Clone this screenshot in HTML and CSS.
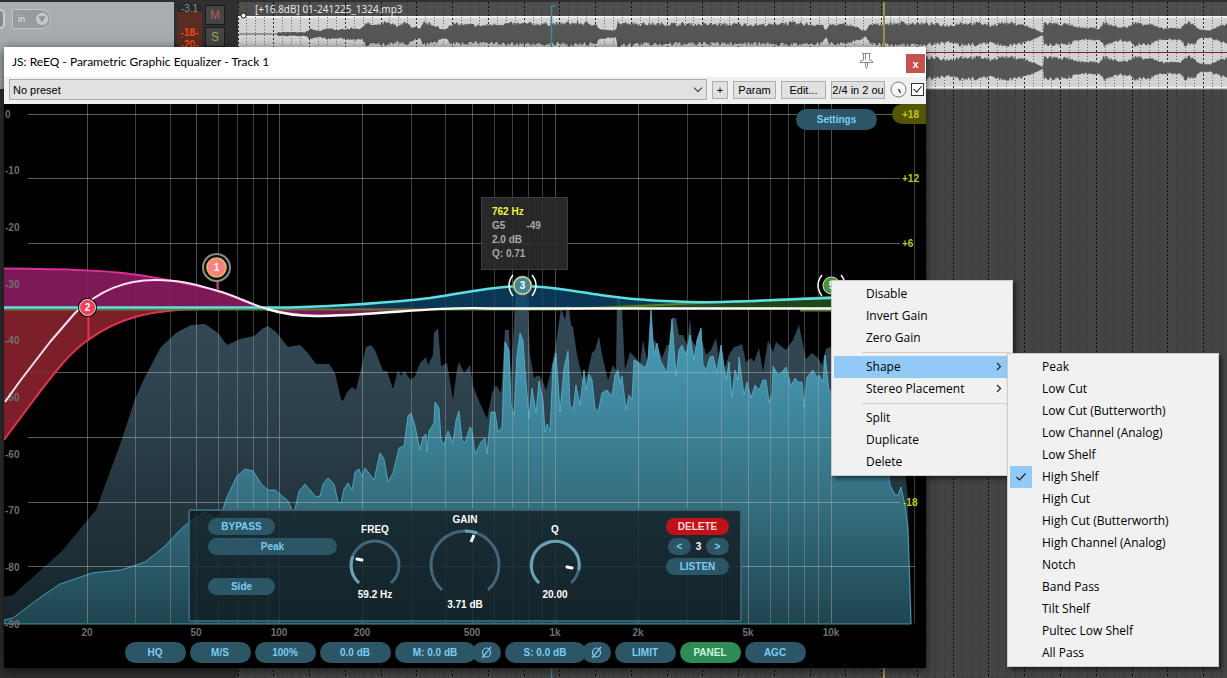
FILE: index.html
```html
<!DOCTYPE html>
<html lang="en">
<head>
<meta charset="utf-8">
<title>ReEQ - Parametric Graphic Equalizer</title>
<link rel="stylesheet" href="styles.css">
</head>
<body>
<div class="daw">
  <div class="side">
    <div class="track">
      <div class="track-main">
        <span class="track-dial"></span>
        <button class="input-btn" type="button">in
          <svg width="17" height="16" viewBox="0 0 17 16"><circle cx="8" cy="8" r="7" fill="#c3c7c8"/><path d="M4 5h8l-4 7z" fill="#8d9294"/></svg>
        </button>
      </div>
      <div class="meter"><span class="peak">-3.1</span><span class="hot">-18-</span><span class="hot">-20-</span></div>
      <div class="track-btns">
        <button class="mute" type="button">M</button>
        <button class="solo" type="button">S</button>
      </div>
    </div>
  </div>
  <div class="arrange">
    <svg class="arrange-art" viewBox="238 0 989 678" preserveAspectRatio="xMinYMin slice" aria-hidden="true">
      <rect x="238" width="989" height="678" fill="#444"/>
      <rect x="238" y="2" width="989" height="14" fill="#4e4e4e"/>
      <rect x="238" y="16" width="989" height="73" fill="#d0d3d2"/>
      <path d="M238 17h989M238 87.500h989" stroke="#f1f3f2" stroke-width="2"/>
      <path d="M238 89h989" stroke="#999"/>
      <path id="minor" stroke="#222" stroke-opacity=".6" stroke-dasharray="1 2" fill="none"/>
      <path id="major" stroke="#000" stroke-opacity=".8" stroke-dasharray="2 2" fill="none"/>
      <path id="wave-l" fill="#565656"/>
      <path id="wave-r" fill="#565656"/>
      <path d="M238 52.500h989" stroke="#8a1f24" stroke-width="1"/>
      <rect x="238" width="989" height="2" fill="#303030"/>
      <path d="M551.500 678V6h4" stroke="#3f8f85" stroke-width="1.500" fill="none"/>
      <path d="M884 2v676" stroke="#a0924c" stroke-width="2"/>
      <circle cx="243.500" cy="15.500" r="2.500" fill="#fff" stroke="#111"/>
    </svg>
    <span class="item-name">[+16.8dB] 01-241225_1324.mp3</span>
  </div>
</div>

<main class="window">
  <header class="titlebar">
    <h1>JS: ReEQ - Parametric Graphic Equalizer - Track 1</h1>
    <button class="pin" type="button" aria-label="Pin">
      <svg width="16" height="18" viewBox="0 0 16 18" fill="none" stroke="#8c8c8c"><path d="M3 1.500h9M4.500 2v6M10.500 2v6M6.500 2v5.500M4.500 8Q1 8.500 1 10.500h13Q14 8.500 10.500 8M6.500 11v3.500l1 2 1-2V11"/></svg>
    </button>
    <button class="close" type="button" aria-label="Close">x</button>
  </header>
  <div class="toolbar">
    <div class="preset">
      <select aria-label="Preset"><option>No preset</option></select>
      <svg width="10" height="6" viewBox="0 0 10 6" fill="none" stroke="#444" stroke-width="1.200"><path d="M1 .7l4 4 4-4"/></svg>
    </div>
    <button class="tool add" type="button">+</button>
    <button class="tool param" type="button">Param</button>
    <button class="tool edit" type="button">Edit...</button>
    <button class="tool io" type="button">2/4 in 2 ou</button>
    <svg class="wet" width="17" height="17" viewBox="0 0 17 17"><circle cx="8.500" cy="8.500" r="7.500" fill="#f8f8f8" stroke="#777"/><path d="M8.500 8l2 4" stroke="#222" stroke-width="1.300"/></svg>
    <input class="enable" type="checkbox" checked aria-label="Enable effect">
  </div>

  <section class="graph">
    <svg class="plot" viewBox="4 104 922 564" preserveAspectRatio="none">
      <defs>
        <linearGradient id="peakFill" gradientUnits="userSpaceOnUse" x1="0" y1="300" x2="0" y2="624"><stop offset="0" stop-color="#344b58"/><stop offset=".45" stop-color="#293d47"/><stop offset="1" stop-color="#15242a"/></linearGradient>
        <linearGradient id="liveFill" gradientUnits="userSpaceOnUse" x1="0" y1="310" x2="0" y2="624"><stop offset="0" stop-color="#4b9fba"/><stop offset=".35" stop-color="#3e859b"/><stop offset=".65" stop-color="#336b7b"/><stop offset="1" stop-color="#1f4550"/></linearGradient>
      </defs>
      <rect x="4" y="104" width="922" height="564" fill="#000"/>
      <path fill="url(#peakFill)" d="M4 624V597L13 595 62 551 96 510 121 442 135 399 144 379 155 358 161 347 176 333 191 325 205 324 218 333 227 345 240 339 254 336 262 329 268 326 276 332 288 347 300 345 307 352 316 364 329 364 335 373 341 399 343 401 347 392 352 387 356 390 361 369 366 347 371 345 375 350 383 371 387 371 393 389 398 370 401 376 404 371 411 380 415 376 420 363 426 357 428 365 433 355 434 333 438 328 441 366 447 363 453 400 457 369 459 362 464 373 470 365 473 386 479 401 487 419 492 393 496 385 501 393 505 330 509 330 511 380 515 305 516 289 527 289 530 355 534 378 539 375 542 380 546 390 550 375 555 350 558 330 561 308 565 320 568 301 571 325 573 327 577 355 583 380 587 375 592 353 595 350 599 336 602 355 608 380 613 365 616 370 617 300 619 295 622 310 625 370 630 352 636 358 640 365 643 340 647 360 650 345 655 340 662 358 667 345 670 345 672 318 676 318 679 335 683 335 687 345 690 318 692 340 698 350 702 340 706 355 711 350 716 338 719 360 724 370 729 355 734 347 738 346 742 344 746 362 751 358 754 362 759 348 763 372 768 340 773 352 776 342 786 350 793 340 799 325 803 345 806 359 812 353 818 358 822 365 826 349 830 347 850 370 880 420 905 470 908 500 912 624Z"/>
      <path fill="url(#liveFill)" stroke="#57b9d5" stroke-opacity=".75" d="M4 624V620L13 618 38 599 60 584 92 573 121 570 145 562 164 547 180 530 189 522 205 512 215 518 221 515 227 497 237 476 245 469 253 471 262 485 268 490 275 490 288 501 294 514 299 491 305 484 316 497 320 496 323 484 328 478 334 484 338 502 341 503 344 489 348 483 352 490 355 472 359 469 362 477 365 468 374 480 380 453 384 459 388 482 393 473 399 448 404 446 408 416 411 413 415 426 420 450 423 437 426 434 427 452 429 431 434 423 435 402 439 408 441 440 444 445 448 431 453 443 456 420 459 411 462 440 465 443 470 427 472 430 475 454 481 442 485 438 487 454 491 412 495 412 498 432 502 427 505 342 509 350 511 405 514 415 517 355 520 333 523 340 525 370 529 418 532 388 536 413 539 381 543 400 545 432 547 424 550 431 553 365 556 353 560 412 564 368 568 351 570 405 573 409 576 385 580 405 584 370 586 390 589 374 592 380 595 408 598 412 602 393 607 390 612 396 615 375 618 370 620 383 622 376 626 410 629 395 632 400 634 360 638 362 645 368 648 360 651 310 654 355 657 343 660 360 667 373 672 319 676 376 679 350 682 345 686 355 690 335 694 360 697 340 701 328 703 365 706 370 710 357 713 356 717 372 721 345 726 380 729 362 732 398 735 370 738 380 739 357 744 395 747 382 751 398 755 385 759 390 763 380 766 380 769 402 772 395 773 366 778 375 782 372 786 367 791 386 795 378 798 382 802 382 804 407 807 377 813 370 817 378 819 375 823 382 825 355 829 390 832 392 860 420 888 470 890 485 895 495 898 495 901 487 905 505 908 530 911 624Z"/>
      <g fill="none" stroke="#b9b9b9" stroke-opacity=".42">
        <path d="M87.500 104V623M279.500 104V623M196.500 104V623M362.500 104V623M472.500 104V623M555.500 104V623M638.500 104V623M748.500 104V623M831.500 104V623"/>
        <path stroke-opacity=".34" d="M135.500 104V623M170.500 104V623M218.500 104V623M237.500 104V623M253.500 104V623M267.500 104V623M411.500 104V623M445.500 104V623M494.500 104V623M512.500 104V623M528.500 104V623M542.500 104V623M687.500 104V623M721.500 104V623M770.500 104V623M788.500 104V623M804.500 104V623M818.500 104V623M914.500 104V623"/>
        <path stroke-opacity=".5" d="M28 114.500H900M28 178.500H900M28 243.500H900M28 372.500H900M28 437.500H900M28 502.500H900M28 566.500H915"/>
      </g>
      <path fill="#8b1c60" fill-opacity=".9" d="M4 268 41 269 80 271 135 274 165 279 190 284 218 291 250 302 267 309 285 313 315 316 340 315 400 311 450 308H4Z"/>
      <path fill="#8a222e" fill-opacity=".9" d="M4 308H240L200 309 165 311 135 317 110 327 88 340 63 363 30 405 4 440Z"/>
      <path fill="#0d4b70" fill-opacity=".75" d="M290 308 337 306 380 303 430 298 470 291 515 286 550 288 600 295 640 300 690 302 740 308Z"/>
      <path fill="#234d1c" fill-opacity=".9" d="M560 308 640 304 700 302 760 300 832 297V308Z"/>
      <g class="axis">
        <text x="5" y="118">0</text><text x="5" y="174">-10</text><text x="5" y="231">-20</text><text x="5" y="288">-30</text><text x="5" y="344">-40</text><text x="5" y="401">-50</text><text x="5" y="458">-60</text><text x="5" y="514">-70</text><text x="5" y="571">-80</text><text x="5" y="628">-90</text>
      </g>
      <g class="axis mid">
        <text x="87" y="636">20</text><text x="196" y="636">50</text><text x="279" y="636">100</text><text x="362" y="636">200</text><text x="472" y="636">500</text><text x="555" y="636">1k</text><text x="638" y="636">2k</text><text x="748" y="636">5k</text><text x="831" y="636">10k</text>
      </g>
      <g fill="none" stroke-linejoin="round">
        <path stroke="#dc2f9c" stroke-width="2" d="M4 268.500C60 269 110 270 145 276S200 286 218 291 250 304 267 309 315 317 345 315"/>
        <path stroke="#e0344e" stroke-width="2" d="M4 440 30 405Q50 378 63 363T88 340Q110 324 135 317T200 309"/>
        <path stroke="#5a7d2d" stroke-width="2" d="M4 309.500H560L640 306 700 303 770 300 831 297M800 310.500h31"/>
        <path stroke="#5be0e6" stroke-width="2.500" d="M4 307.500H290Q370 305 430 298C470 292 495 286 522 286S580 292 600 295 650 301 690 302 760 300 831 298"/>
        <path stroke="#fff" stroke-width="2.500" d="M267 309Q290 316 315 316T400 311.500 490 308.500H831"/>
        <path stroke="#fbe3f1" stroke-width="2" d="M5 402 20 381 50 342 75 313C100 290 125 280 155 280S200 286 218 291 250 304 267 309"/>
        <path stroke="#dc2f9c" stroke-width="2" d="M217.500 278V290"/>
        <path stroke="#e0344e" stroke-width="2" d="M88.500 317V341"/>
      </g>
      <g class="nodes">
        <circle cx="216.500" cy="267.500" r="13.500" fill="#111" stroke="#8b8b8b" stroke-width="2"/>
        <circle cx="216.500" cy="267.500" r="9.500" fill="#ff7f83" stroke="#d9c35a" stroke-width="1.500"/>
        <text x="216.500" y="271">1</text>
        <circle cx="87.500" cy="307.500" r="9.500" fill="#000"/>
        <circle cx="87.500" cy="307.500" r="8" fill="#f23e5b" stroke="#ffe0e4"/>
        <text x="87.500" y="311">2</text>
        <circle cx="522.500" cy="285.500" r="10" fill="#8f8a3c"/>
        <circle cx="522.500" cy="285.500" r="8.500" fill="#43898c" stroke="#e6f2ee"/>
        <text x="522.500" y="289">3</text>
        <path d="M513 275Q505 285 513 296M532 275Q540 285 532 296" fill="none" stroke="#fff" stroke-width="1.500"/>
        <circle cx="831.500" cy="285.500" r="8.500" fill="#4c9136" stroke="#d8ecd2"/>
        <text x="831.500" y="289">5</text>
        <path d="M822 275Q814 285 822 296M841 275Q849 285 841 296" fill="none" stroke="#fff" stroke-width="1.500"/>
      </g>
      <path d="M926 104H902a10 10 0 0 0 0 20H926Z" fill="#555500"/>
      <g class="axis gain"><text x="902" y="118">+18</text><text x="902" y="182">+12</text><text x="902" y="247">+6</text><text x="903" y="506">-18</text></g>
    </svg>

    <button class="pill settings" type="button">Settings</button>
    <div class="readout"><b>762 Hz</b><span>G5<i>-49</i></span><span>2.0 dB</span><span>Q: 0.71</span></div>

    <div class="panel">
      <div class="band-opts">
        <button class="pill" type="button">BYPASS</button>
        <button class="pill wide" type="button">Peak</button>
        <button class="pill side-btn" type="button">Side</button>
      </div>
      <div class="knobs">
        <div class="knob"><span>FREQ</span>
          <svg width="54" height="48" viewBox="-27 -27 54 48"><g fill="none" stroke-width="3"><path stroke="#456579" d="M-16 18A24 24 0 1 1 16 18"/><path stroke="#6ba3b4" d="M-16 18A24 24 0 0 1-22-9"/><path stroke="#fff" stroke-linecap="round" d="M-18-6l5 1"/></g></svg>
          <output>59.2 Hz</output></div>
        <div class="knob big"><span>GAIN</span>
          <svg width="74" height="66" viewBox="-37 -37 74 66"><g fill="none" stroke-width="3"><path stroke="#456579" d="M-23 25A34 34 0 1 1 23 25"/><path stroke="#6ba3b4" d="M0-34A34 34 0 0 1 12-32"/><path stroke="#fff" d="M6-23l3-7"/></g></svg>
          <output>3.71 dB</output></div>
        <div class="knob"><span>Q</span>
          <svg width="54" height="48" viewBox="-27 -27 54 48"><g fill="none" stroke-width="3"><path stroke="#456579" d="M-16 18A24 24 0 1 1 16 18"/><path stroke="#6ba3b4" d="M-16 18A24 24 0 1 1 24 5"/><path stroke="#fff" stroke-linecap="round" d="M12 2l5 1"/></g></svg>
          <output>20.00</output></div>
      </div>
      <div class="band-nav">
        <button class="pill danger" type="button">DELETE</button>
        <div class="stepper"><button class="pill" type="button">&lt;</button><b>3</b><button class="pill" type="button">&gt;</button></div>
        <button class="pill" type="button">LISTEN</button>
      </div>
    </div>

    <footer class="bottom">
      <button class="pill" type="button">HQ</button>
      <button class="pill" type="button">M/S</button>
      <button class="pill" type="button">100%</button>
      <button class="pill level" type="button">0.0 dB</button>
      <div class="pair"><button class="pill chan" type="button">M: 0.0 dB</button><button class="pill phase" type="button" aria-label="Invert mid phase"><svg width="13" height="13" viewBox="0 0 13 13" fill="none" stroke="#7ccdf0" stroke-width="1.200"><ellipse cx="6.500" cy="6.500" rx="4" ry="4.500"/><path d="M2 12l9-11"/></svg></button></div>
      <div class="pair"><button class="pill chan" type="button">S: 0.0 dB</button><button class="pill phase" type="button" aria-label="Invert side phase"><svg width="13" height="13" viewBox="0 0 13 13" fill="none" stroke="#7ccdf0" stroke-width="1.200"><ellipse cx="6.500" cy="6.500" rx="4" ry="4.500"/><path d="M2 12l9-11"/></svg></button></div>
      <button class="pill" type="button">LIMIT</button>
      <button class="pill on" type="button">PANEL</button>
      <button class="pill" type="button">AGC</button>
    </footer>
  </section>
</main>

<ul class="menu band-menu">
  <li><button type="button">Disable</button></li>
  <li><button type="button">Invert Gain</button></li>
  <li><button type="button">Zero Gain</button></li>
  <li class="sep"></li>
  <li class="active"><button type="button">Shape<svg width="6" height="9" viewBox="0 0 6 9"><path d="M1 1l3.500 3.500L1 8"/></svg></button></li>
  <li><button type="button">Stereo Placement<svg width="6" height="9" viewBox="0 0 6 9"><path d="M1 1l3.500 3.500L1 8"/></svg></button></li>
  <li class="sep"></li>
  <li><button type="button">Split</button></li>
  <li><button type="button">Duplicate</button></li>
  <li><button type="button">Delete</button></li>
</ul>
<ul class="menu shape-menu">
  <li><button type="button">Peak</button></li>
  <li><button type="button">Low Cut</button></li>
  <li><button type="button">Low Cut (Butterworth)</button></li>
  <li><button type="button">Low Channel (Analog)</button></li>
  <li><button type="button">Low Shelf</button></li>
  <li class="checked"><svg width="22" height="22" viewBox="0 0 22 22"><path d="M6.500 11l3 3 6-6.500"/></svg><button type="button">High Shelf</button></li>
  <li><button type="button">High Cut</button></li>
  <li><button type="button">High Cut (Butterworth)</button></li>
  <li><button type="button">High Channel (Analog)</button></li>
  <li><button type="button">Notch</button></li>
  <li><button type="button">Band Pass</button></li>
  <li><button type="button">Tilt Shelf</button></li>
  <li><button type="button">Pultec Low Shelf</button></li>
  <li><button type="button">All Pass</button></li>
</ul>
<script src="app.js"></script>
</body>
</html>
```
FILE: styles.css
```css
* { box-sizing: border-box; }
body { margin: 0; height: 100vh; overflow: hidden; position: relative; background: #2e2e2e; font-family: "Liberation Sans", Arial, sans-serif; font-size: 11px; }
button { font: inherit; padding: 0; border: 0; cursor: default; }
h1, ul { margin: 0; padding: 0; }

.daw { display: flex; height: 100%; }
.side { width: 238px; padding-top: 2px; }
.track { display: flex; height: 87px; background: #2f3031; }
.track-main { width: 174px; display: flex; align-items: flex-start; background: linear-gradient(#a9aeb0, #a2a7a9); }
.track-dial { width: 5px; height: 20px; margin: 7px 7px 0 0; border: 2px solid #c9cccd; border-left: 0; border-radius: 0 10px 10px 0; background: #888; }
.input-btn { display: flex; align-items: center; gap: 10px; height: 20px; width: 39px; margin-top: 7px; padding-left: 5px; border: 1px solid #c2c6c7; border-radius: 2px 10px 10px 2px; background: #969b9d; color: #e8eaea; font-size: 9px; }
.meter { width: 25px; height: 44px; margin: 1px 3px; display: flex; flex-direction: column; align-items: center; gap: 1px; line-height: 11px; background: linear-gradient(#2b2b2b 9px, #5a2c22 9px); color: #8c8c8c; font-size: 10px; }
.meter .peak { margin-bottom: 12px; }
.meter .hot { color: #f2481d; font-weight: bold; }
.track-btns { display: flex; flex-direction: column; gap: 2px; padding-top: 3px; }
.track-btns button { width: 20px; height: 20px; border: 1px solid #191919; background: #454545; font-size: 12px; }
.mute { color: #b0605c; }
.solo { color: #9aa850; }
.arrange { flex: 1; position: relative; overflow: hidden; }
.arrange-art { display: block; width: 100%; height: 100%; }
.item-name { position: absolute; left: 17px; top: 2px; color: #e6e6e6; font: 10px/14px "Noto Sans", sans-serif; }

.window { position: absolute; left: 4px; right: 301px; top: 47px; bottom: 10px; display: flex; flex-direction: column; background: #fff; box-shadow: 0 2px 10px rgba(0, 0, 0, .65); }
.titlebar { display: flex; align-items: center; height: 30px; padding: 0 1px 0 8px; }
.titlebar h1 { flex: 1; font: 12px/30px Lato, "Open Sans", sans-serif; color: #000; }
.pin { display: flex; margin: 0 31px 2px 0; background: none; }
.close { width: 19px; height: 19px; margin-top: 3px; background: #c75050; color: #fff; font-weight: bold; }
.toolbar { display: flex; align-items: center; height: 27px; padding: 0 2px 2px 5px; gap: 5px; background: #f0f0f0; color: #000; font-size: 11px; }
.preset { flex: 1; display: grid; align-items: center; }
.preset select { grid-area: 1 / 1; width: 100%; height: 21px; padding: 0 3px; appearance: none; border: 1px solid #adadad; border-radius: 0; background: #e1e1e1; color: #000; font: 11px "Liberation Sans", Arial, sans-serif; }
.preset svg { grid-area: 1 / 1; justify-self: end; margin-right: 4px; pointer-events: none; }
.tool { height: 18px; border: 1px solid #adadad; background: #e1e1e1; color: #000; white-space: nowrap; }
.add { width: 16px; }
.param { width: 43px; }
.edit { width: 45px; }
.io { width: 54px; }
.enable { appearance: none; width: 13px; height: 13px; margin: 0 0 0 -1px; border: 1px solid #333; background: #fff; }
.enable::before { content: ""; display: block; width: 4px; height: 7px; margin: 0 auto; border: solid #222; border-width: 0 1px 1px 0; transform: rotate(40deg); }

.graph { flex: 1; min-height: 0; position: relative; background: #000; }
.plot { display: block; width: 100%; height: 100%; }
.axis { fill: #6f6f6f; font-size: 10px; font-weight: bold; }
.mid, .nodes { text-anchor: middle; }
.gain { fill: #c6c619; }
.nodes { fill: #fff; font-size: 10px; font-weight: bold; }

.pill { height: 17px; border-radius: 11px; background: #2c5566; color: #7ccdf0; font-size: 10px; font-weight: bold; }
.settings { position: absolute; top: 5px; right: 49px; width: 81px; height: 21px; }
.readout { position: absolute; left: 477px; top: 93px; width: 87px; height: 73px; padding: 7px 10px; display: flex; flex-direction: column; border: 1px solid #3d3d3d; background: rgba(44, 44, 44, .9); color: #a9a9a9; font-size: 10px; font-weight: bold; line-height: 14px; }
.readout b { color: #f5f53c; }
.readout i { margin-left: 21px; font-style: normal; }

.panel { position: absolute; left: 0; right: 0; bottom: 46px; width: 554px; height: 113px; margin: 0 auto; display: flex; padding: 7px 11px 0 18px; border: 2px solid #3b6074; border-radius: 3px; background: rgba(17, 27, 32, .78); color: #fff; font-size: 10px; font-weight: bold; }
.band-opts, .band-nav { display: flex; flex-direction: column; gap: 3px; }
.band-opts { width: 129px; align-items: flex-start; }
.band-opts .pill { width: 67px; }
.band-opts .wide { width: 129px; }
.side-btn { margin-top: 20px; }
.knobs { display: flex; align-items: flex-start; gap: 26px; margin-left: 11px; }
.knob { display: flex; flex-direction: column; align-items: center; width: 54px; margin-top: 6px; line-height: 12px; }
.knob svg { margin-top: 2px; }
.knob.big { width: 74px; margin-top: -4px; }
.knob.big output { margin-top: 5px; }
.knob output { margin-top: 3px; white-space: nowrap; }
.band-nav { width: 63px; margin-left: auto; }
.stepper { display: flex; justify-content: space-between; align-items: center; padding-left: 2px; }
.stepper .pill { width: 23px; }
.danger { background: #c01018; color: #ffd6d6; }
.bottom { position: absolute; left: 0; right: 0; bottom: 5px; display: flex; justify-content: center; gap: 4px; }
.bottom .pill { width: 61px; height: 21px; }
.bottom .level { width: 71px; }
.pair { display: flex; }
.bottom .chan { width: 81px; }
.bottom .phase { display: flex; align-items: center; justify-content: center; width: 29px; margin-left: -4px; }
.bottom .on { background: #2e8b57; color: #c9f5dc; }

.menu { position: absolute; list-style: none; padding: 2px; border: 1px solid #ccc; background: #f1f1f1; box-shadow: 3px 3px 4px rgba(0, 0, 0, .5); font: 12px "Open Sans", "Noto Sans", sans-serif; }
.menu li { position: relative; height: 22px; }
.menu button { display: flex; align-items: center; justify-content: space-between; width: 100%; height: 22px; padding: 0 8px 2px 32px; background: none; color: #000; text-align: left; }
.menu svg path { fill: none; stroke: #222; stroke-width: 1.200; }
.menu .sep { height: 7px; margin-left: 28px; border-bottom: 3px solid transparent; border-top: 3px solid transparent; background: #cfcfcf; background-clip: padding-box; }
.menu .active { background: #91c9f7; }
.checked > svg { position: absolute; left: 0; top: 0; background: #91c9f7; }
.band-menu { left: 831px; top: 280px; width: 182px; }
.shape-menu { left: 1007px; top: 353px; width: 212px; }
```
FILE: app.js
```js
// Amplitude envelope of the audio item: [x, half height]
const envelope = [
  [239, .5], [277, .5], [278, 2], [305, 2], [310, 5], [320, 3], [328, 6], [340, 4], [345, 6], [362, 6],
  [365, 12], [375, 9], [385, 12], [398, 9], [405, 12], [412, 8], [420, 5], [424, 12], [437, 9], [440, 5],
  [446, 5], [450, 11], [480, 9], [500, 11], [560, 11], [570, 12], [595, 11], [600, 5], [607, 4], [616, 4],
  [618, 13], [640, 11], [775, 10], [780, 12], [822, 10], [826, 4], [830, 10], [850, 10], [866, 3], [870, 10],
  [900, 12], [930, 11], [950, 9], [960, 12], [985, 11], [990, 9], [1000, 12], [1020, 11], [1035, 5], [1043, 1],
  [1044, 12], [1070, 10], [1075, 7], [1100, 6], [1104, 12], [1120, 7], [1130, 8], [1132, 12], [1150, 11],
  [1160, 6], [1180, 6], [1185, 12], [1195, 11], [1198, 5], [1210, 4], [1227, 11]
];

function amplitude(x) {
  let i = 1;
  while (i < envelope.length - 1 && envelope[i][0] < x) i++;
  const [x0, a0] = envelope[i - 1];
  const [x1, a1] = envelope[i];
  return a0 + (a1 - a0) * Math.min(1, (x - x0) / (x1 - x0));
}

function wave(centre, seed) {
  let s = seed;
  const noise = () => (s = (s * 16807) % 2147483647) / 2147483647;
  const top = [];
  const bottom = [];
  for (let x = 239; x <= 1227; x++) {
    const a = amplitude(x);
    top.push(x + " " + (centre - a * (.72 + .4 * noise())).toFixed(1));
    bottom.unshift(x + " " + (centre + a * (.72 + .4 * noise())).toFixed(1));
  }
  return "M" + top.concat(bottom).join("L") + "Z";
}

document.getElementById("wave-l").setAttribute("d", wave(34, 7));
document.getElementById("wave-r").setAttribute("d", wave(68, 7));

// Beat and bar lines
let minor = "";
let major = "";
for (let n = 0; n <= 111; n++) {
  const line = "M" + (Math.floor(238 + n * 8.94) + .5) + " 2V678";
  if (n % 4) minor += line; else major += line;
}
document.getElementById("minor").setAttribute("d", minor);
document.getElementById("major").setAttribute("d", major);
```
